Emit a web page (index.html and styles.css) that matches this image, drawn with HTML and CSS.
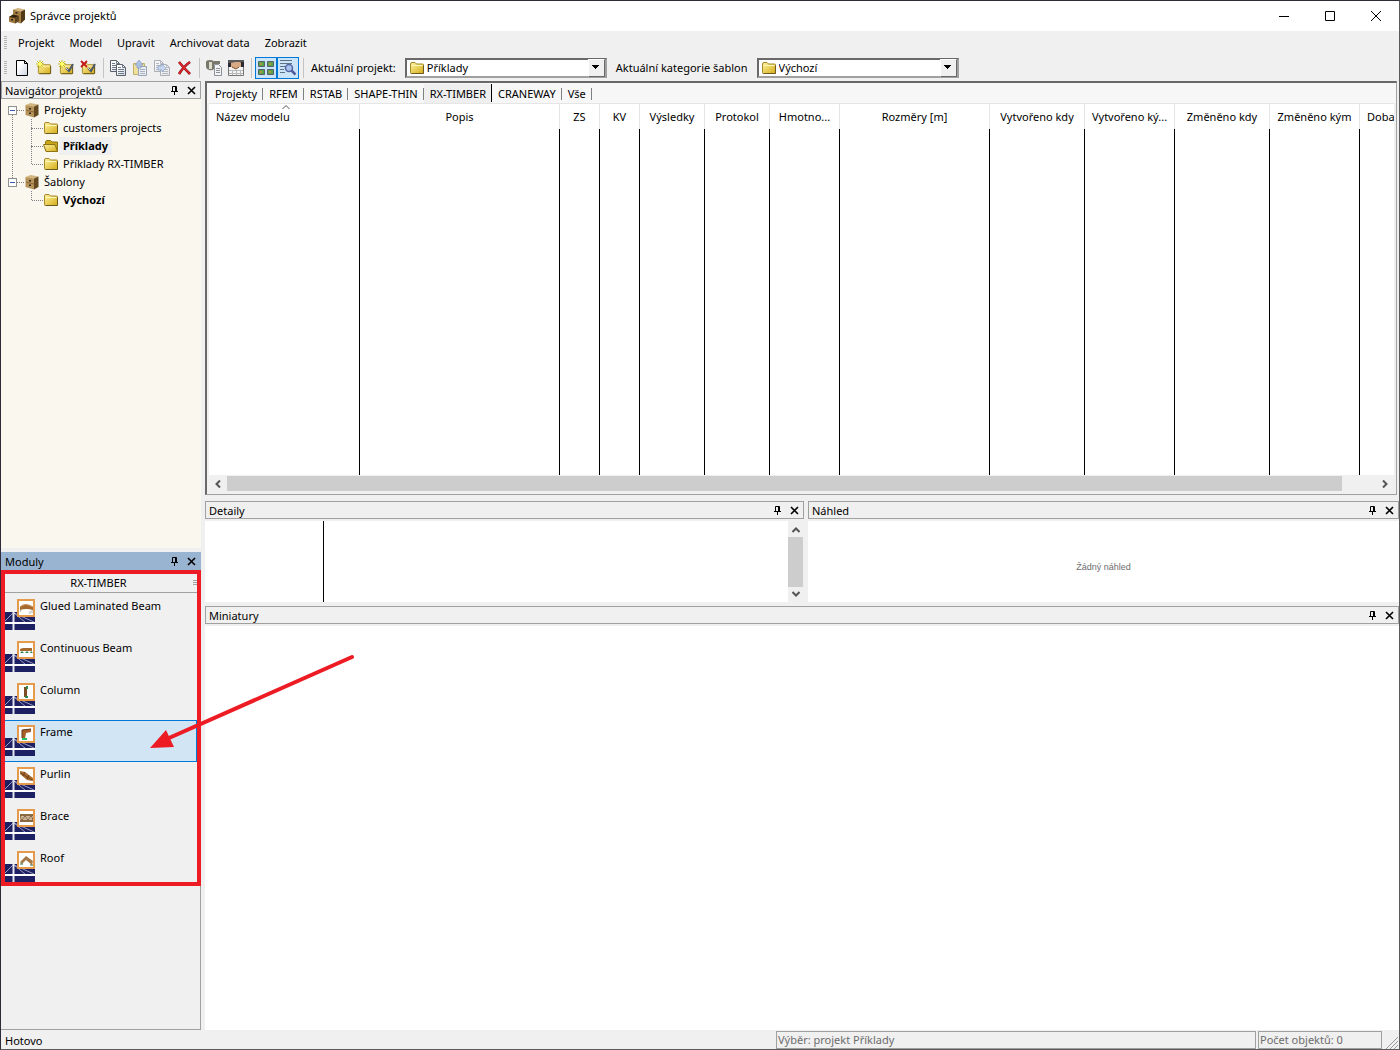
FILE: index.html
```
<!DOCTYPE html>
<html lang="cs">
<head>
    <meta charset="UTF-8">
    <meta name="viewport" content="width=device-width, initial-scale=1.0">
    <title>Správce projektů</title>
    <link rel="stylesheet" href="styles.css">
</head>
<body>
    <!-- shared icons -->
    <svg class="sprite" aria-hidden="true">
        <defs>
            <linearGradient id="gold" x1="0" y1="0" x2="1" y2="1">
                <stop offset="0" stop-color="#fff3a0"/>
                <stop offset="1" stop-color="#d5ac18"/>
            </linearGradient>
            <linearGradient id="paper" x1="0" y1="0" x2="1" y2="1">
                <stop offset="0.3" stop-color="#ffffff"/>
                <stop offset="1" stop-color="#ccd3e2"/>
            </linearGradient>
        </defs>
        <symbol id="folder" viewBox="0 0 16 16">
            <path d="M1.500 4q0-1.500 1.500-1.500h3l1.500 1.500h6q1 0 1 1v7.500q0 1-1 1h-11q-1 0-1-1z" fill="url(#gold)" stroke="#a48a26"/>
            <path d="M2.500 5.500h11" stroke="#fff8bd"/>
            <path d="M2.500 13.500h12v-8" fill="none" stroke="#6b5a1c"/>
        </symbol>
        <symbol id="folder-open" viewBox="0 0 16 16">
            <path d="M2.500 12.500v-9l1-1h4l1.500 1.500h5.500v9z" fill="#c9a51a" stroke="#8c7414"/>
            <path d="M.5 6.500h11.500l2.500 7h-11.500z" fill="url(#gold)" stroke="#8c7414"/>
        </symbol>
        <symbol id="cabinet" viewBox="0 0 16 16">
            <path d="M1.500 3l5-2 8 1.500-4.500 2z" fill="#d3b67c"/>
            <path d="M1.500 3l8.500 1.500v11l-8.500-2.500z" fill="#b5935a"/>
            <path d="M10 4.500l4.500-2v10.500l-4.500 2.500z" fill="#644820"/>
            <path d="M2 8.200l8 1.800" stroke="#8a6a38"/>
            <path d="M5 6h2v1.500h-2zM5 10.500h2v1.500h-2z" fill="#2f2518"/>
        </symbol>
        <symbol id="pin" viewBox="0 0 9 9">
            <path d="M2.500 5.500v-5h4v5M5.500 0v6M1 5.500h7M4.500 6v3" fill="none" stroke="#000"/>
        </symbol>
        <symbol id="cross" viewBox="0 0 9 9">
            <path d="M1 1l7 7M8 1l-7 7" stroke="#000" stroke-width="1.600"/>
        </symbol>
        <symbol id="star" viewBox="0 0 8 8">
            <path d="M4 0v8M0 4h8M1 1l6 6M7 1l-6 6" stroke="#c5bd18"/>
            <path d="M4 2v4M2 4h4" stroke="#fffb70" stroke-width="2"/>
        </symbol>
        <symbol id="sheet" viewBox="0 0 10 12">
            <path d="M.5.5h6l3 3v8h-9z" fill="url(#paper)" stroke="#59606c"/>
            <path d="M6.500.5v3h3M2 3.500h3M2 5.500h6M2 7.500h6M2 9.500h6" fill="none" stroke="#6f7886"/>
        </symbol>
        <symbol id="bridge" viewBox="0 0 31 31">
            <path d="M0 13h31v18h-31z" fill="#1d2163"/>
            <path d="M0 23l9-9M10 14l20 9M10 14l11 9" stroke="#b9bcd6" stroke-width=".8" fill="none"/>
            <path d="M9.500 13v18" stroke="#e4e5ef" stroke-width="2"/>
            <path d="M0 24h31" stroke="#fff" stroke-width="2"/>
            <path d="M14 1h16v16h-16z" fill="#fff" stroke="#e69b4c" stroke-width="2"/>
        </symbol>
    </svg>

    <header class="titlebar">
        <svg class="icon" viewBox="0 0 16 16">
            <path d="M4 1.500l5-1.500 7 1.500-4 2z" fill="#d3b67c"/>
            <path d="M4 1.500l8 2v12l-8-2.500z" fill="#a27e42"/>
            <path d="M12 3.500l4-2v10l-4 4z" fill="#513817"/>
            <path d="M0 9l4-2.500 6 1.500v5l-4 2.500-6-1.800z" fill="#9c783d"/>
            <path d="M0 9l4-2.500 6 1.500-4 2z" fill="#33240f"/>
            <path d="M6 10l4-2v5l-4 2.500z" fill="#604521"/>
            <path d="M6.500 4h2v1.500h-2zM2 11h2v1.500h-2z" fill="#2f2518"/>
        </svg>
        <h1>Správce projektů</h1>
        <div class="window-buttons">
            <button aria-label="Minimalizovat"><svg viewBox="0 0 12 12"><path d="M1 6.500h10" stroke="#000"/></svg></button>
            <button aria-label="Maximalizovat"><svg viewBox="0 0 12 12"><path d="M1.500 1.500h9v9h-9z" fill="none" stroke="#000"/></svg></button>
            <button aria-label="Zavřít"><svg viewBox="0 0 12 12"><path d="M1 1l10 10M11 1l-10 10" stroke="#000"/></svg></button>
        </div>
    </header>

    <nav class="menubar">
        <span class="grip"></span>
        <button>Projekt</button>
        <button>Model</button>
        <button>Upravit</button>
        <button>Archivovat data</button>
        <button>Zobrazit</button>
    </nav>

    <div class="toolbar">
        <span class="grip"></span>
        <button class="tool" aria-label="Nový model"><svg viewBox="0 0 16 16"><path d="M2.500.5h8l3 3v12h-11z" fill="url(#paper)" stroke="#000"/><path d="M10.500.5v3h3" fill="none" stroke="#000"/></svg></button>
        <button class="tool" aria-label="Nový projekt"><svg viewBox="0 0 16 16"><use href="#folder" x="1" y="1" width="15" height="15"/><use href="#star" width="8" height="8"/></svg></button>
        <button class="tool" aria-label="Připojit projekt"><svg viewBox="0 0 16 16"><use href="#folder" x="1" y="1" width="15" height="15"/><use href="#star" width="8" height="8"/><path d="M8 8l3 3 4-7" fill="none" stroke="#4d5868" stroke-width="2"/><path d="M8 8l2 2M14 4l1-1" stroke="#d7dce4"/></svg></button>
        <button class="tool" aria-label="Odpojit projekt"><svg viewBox="0 0 16 16"><use href="#folder" x="1" y="1" width="15" height="15"/><path d="M1 1l6 6M7 1l-6 6" stroke="#c5161c" stroke-width="1.800"/><path d="M8 8l3 3 4-7" fill="none" stroke="#4d5868" stroke-width="2"/><path d="M8 8l2 2" stroke="#d7dce4"/></svg></button>
        <span class="divider"></span>
        <button class="tool" aria-label="Kopírovat"><svg viewBox="0 0 16 16"><use href="#sheet" width="10" height="12"/><use href="#sheet" x="6" y="4" width="10" height="12"/></svg></button>
        <button class="tool" aria-label="Vložit"><svg viewBox="0 0 16 16"><path d="M1.500 3.500h11v11h-11z" fill="#efdf9d" stroke="#c2b067"/><path d="M6.500 6.500h8v9h-8z" fill="#e8ecf3" stroke="#9aa3b2"/><path d="M8 9.500h5M8 11.500h5M8 13.500h5" stroke="#aab2c0"/><path d="M7 0l4 5h-2v3h-4v-3h-2z" fill="#a9bfe4" stroke="#8097c2" stroke-width=".6"/></svg></button>
        <button class="tool" aria-label="Přesunout"><svg viewBox="0 0 16 16"><g opacity=".45"><use href="#sheet" width="10" height="12"/><use href="#sheet" x="6" y="4" width="10" height="12"/></g><path d="M4 6h4v-2l4 4-4 4v-2h-4z" fill="#c7d5ef" stroke="#8ea1c8" stroke-width=".7"/></svg></button>
        <button class="tool" aria-label="Smazat"><svg viewBox="0 0 16 16"><path d="M3 2q4 5 11 12M14 2q-6 4-11 12" fill="none" stroke="#7c1115" stroke-width="2.600"/><path d="M3 2q4 5 11 12M14 2q-6 4-11 12" fill="none" stroke="#e5242a" stroke-width="1.500"/></svg></button>
        <span class="divider"></span>
        <button class="tool" aria-label="Archivovat"><svg viewBox="0 0 16 16"><path d="M0 2q0-2 4-2t4 2v7q-2 2-5 1-3-1-3-3z" fill="#77776c"/><path d="M3 2h3v7h-3z" fill="#dedccb"/><path d="M8 1h6v3h-6z" fill="#77776c"/><path d="M8.500 4.500h4l3 3v8h-7z" fill="#f4f4f4" stroke="#8b919b"/><path d="M10 8.500h4M10 10.500h4M10 12.500h4" stroke="#8b919b"/></svg></button>
        <button class="tool" aria-label="Vlastnosti"><svg viewBox="0 0 16 16"><path d="M.5 3.500h15v12h-15z" fill="#f4f4f4" stroke="#777"/><path d="M1 10.500h14M1 13.500h14M8.500 10v5M12.500 10v5M4.500 10v5" stroke="#b8b8b8"/><path d="M0 0h16v3h-16z" fill="#5b5b5b"/><path d="M3 3l4-1 5 0 2 2v3l-3 0-3 2-5-2z" fill="#d8aa83"/><path d="M0 3h3v4h-3zM13 2h3v5h-3z" fill="#2a2a30"/><path d="M4 7l4 2 3-2" fill="none" stroke="#7d5336"/></svg></button>
        <span class="divider"></span>
        <button class="tool pressed" aria-pressed="true" aria-label="Miniatury"><svg viewBox="0 0 16 16"><path d="M.5 1.500h6v5h-6zM9.500 1.500h6v5h-6zM.5 9.500h6v5h-6zM9.500 9.500h6v5h-6z" fill="#58a34a" stroke="#54626c"/><path d="M2 3h2v2h-2zM11 3h2v2h-2zM2 11h2v2h-2zM11 11h2v2h-2z" fill="#b4943e"/></svg></button>
        <button class="tool pressed" aria-pressed="true" aria-label="Detaily"><svg viewBox="0 0 16 16"><path d="M0 .5h12M0 3.500h12M0 6.500h5M0 9.500h4M0 12.500h5" stroke="#5d7488"/><circle cx="9" cy="8" r="3.500" fill="#a9c5ee" stroke="#5566a6" stroke-width="1.500"/><path d="M11.500 10.500l4 4" stroke="#5058a0" stroke-width="2.500"/></svg></button>
        <span class="divider"></span>
        <label for="project">Aktuální projekt:</label>
        <div class="combo">
            <svg class="icon"><use href="#folder"/></svg>
            <select id="project">
                <option>Příklady</option>
                <option>customers projects</option>
                <option>Příklady RX-TIMBER</option>
            </select>
        </div>
        <label for="template">Aktuální kategorie šablon</label>
        <div class="combo">
            <svg class="icon"><use href="#folder"/></svg>
            <select id="template">
                <option>Výchozí</option>
            </select>
        </div>
    </div>

    <div class="workspace">
        <aside class="sidebar">
            <section class="panel navigator">
                <div class="panel-title">
                    <h2>Navigátor projektů</h2>
                    <button aria-label="Připnout"><svg><use href="#pin"/></svg></button>
                    <button aria-label="Zavřít"><svg><use href="#cross"/></svg></button>
                </div>
                <ul class="tree">
                    <li>
                        <div class="node"><button class="toggle" aria-label="Sbalit"></button><svg class="icon"><use href="#cabinet"/></svg><span>Projekty</span></div>
                        <ul>
                            <li><div class="node"><svg class="icon"><use href="#folder"/></svg><span>customers projects</span></div></li>
                            <li><div class="node current"><svg class="icon"><use href="#folder-open"/></svg><span>Příklady</span></div></li>
                            <li><div class="node"><svg class="icon"><use href="#folder"/></svg><span>Příklady RX-TIMBER</span></div></li>
                        </ul>
                    </li>
                    <li>
                        <div class="node"><button class="toggle" aria-label="Sbalit"></button><svg class="icon"><use href="#cabinet"/></svg><span>Šablony</span></div>
                        <ul>
                            <li><div class="node bold"><svg class="icon"><use href="#folder"/></svg><span>Výchozí</span></div></li>
                        </ul>
                    </li>
                </ul>
            </section>

            <section class="panel modules">
                <div class="panel-title active">
                    <h2>Moduly</h2>
                    <button aria-label="Připnout"><svg><use href="#pin"/></svg></button>
                    <button aria-label="Zavřít"><svg><use href="#cross"/></svg></button>
                </div>
                <div class="module-box">
                    <div class="module-group">
                        <h3>RX-TIMBER</h3>
                        <svg viewBox="0 0 4 7"><path d="M0 1.500h4M0 3.500h4M0 5.500h4" stroke="#a0a0a0"/></svg>
                    </div>
                    <button class="module"><svg viewBox="0 0 31 31"><use href="#bridge"/><path d="M16 8q5-5 13 0v3q-7-2-13 0z" fill="#a8692f"/><path d="M16 8q5-5 13 0" fill="none" stroke="#c98c4c"/><path d="M17 11l-1 2M26 12v3M28 11v3" stroke="#a9b3ad"/></svg>Glued Laminated Beam</button>
                    <button class="module"><svg viewBox="0 0 31 31"><use href="#bridge"/><path d="M16 8l3-1h9v3h-12z" fill="#a8692f"/><path d="M16 12l2-2 2 2zM21 12l2-2 2 2zM26 12l1-2 2 2z" fill="#2b8a4b"/></svg>Continuous Beam</button>
                    <button class="module"><svg viewBox="0 0 31 31"><use href="#bridge"/><path d="M20 4h3v10h-3z" fill="#7d4d26"/><path d="M22 3h2v3h-2zM21 13h3v2h-3z" fill="#2b8a4b"/></svg>Column</button>
                    <button class="module selected"><svg viewBox="0 0 31 31"><use href="#bridge"/><path d="M18 5l9-1v3l-5 1-1 6h-3z" fill="#a8602a"/><path d="M18 5l9-1M18 5v8" stroke="#60371a"/><path d="M18 13h5v2h-5z" fill="#23c365"/></svg>Frame</button>
                    <button class="module"><svg viewBox="0 0 31 31"><use href="#bridge"/><path d="M16 4l5 1 8 6v3l-6-1-7-6z" fill="#a8692f"/><path d="M17 6l11 7M21 5l-2 4M25 8l-2 4" stroke="#593516" stroke-width=".7"/></svg>Purlin</button>
                    <button class="module"><svg viewBox="0 0 31 31"><use href="#bridge"/><path d="M16 5h13v8h-13z" fill="#8b6842"/><path d="M16 11l3-4 3 4 3-4 3 4M17 7l3 4 3-4 3 4 3-4" fill="none" stroke="#e5d6c2" stroke-width=".8"/></svg>Brace</button>
                    <button class="module"><svg viewBox="0 0 31 31"><use href="#bridge"/><path d="M16 11l6-6 7 5-1 4-6-5-4 4z" fill="#a87946"/><path d="M16 13h3M26 14h3" stroke="#346948"/></svg>Roof</button>
                </div>
            </section>

            <!-- highlight of the module list -->
            <div class="highlight"></div>
            <svg class="pointer" viewBox="0 0 210 100"><path d="M203 7L20 88" stroke="#ed1c24" stroke-width="4" stroke-linecap="round"/><path d="M1 98l16-18 8 17z" fill="#ed1c24"/></svg>
        </aside>

        <main class="content">
            <section class="models">
                <div class="tabs" role="tablist">
                    <button role="tab">Projekty</button>
                    <button role="tab">RFEM</button>
                    <button role="tab">RSTAB</button>
                    <button role="tab">SHAPE-THIN</button>
                    <button role="tab" class="active" aria-selected="true">RX-TIMBER</button>
                    <button role="tab">CRANEWAY</button>
                    <button role="tab">Vše</button>
                </div>
                <div class="table-wrap">
                    <table>
                        <colgroup>
                            <col class="w-name"><col class="w-desc"><col class="w-flag"><col class="w-flag"><col class="w-small"><col class="w-small"><col class="w-mass"><col class="w-name"><col class="w-date"><col class="w-user"><col class="w-date"><col class="w-user"><col class="w-date">
                        </colgroup>
                        <thead>
                            <tr>
                                <th class="sorted">Název modelu<svg viewBox="0 0 8 4"><path d="M.5 4l3.500-3.500 3.500 3.500" fill="none" stroke="#555"/></svg></th>
                                <th>Popis</th>
                                <th>ZS</th>
                                <th>KV</th>
                                <th>Výsledky</th>
                                <th>Protokol</th>
                                <th>Hmotno...</th>
                                <th>Rozměry [m]</th>
                                <th>Vytvořeno kdy</th>
                                <th>Vytvořeno ký...</th>
                                <th>Změněno kdy</th>
                                <th>Změněno kým</th>
                                <th class="left">Doba</th>
                            </tr>
                        </thead>
                        <tbody>
                            <tr><td></td><td></td><td></td><td></td><td></td><td></td><td></td><td></td><td></td><td></td><td></td><td></td><td></td></tr>
                        </tbody>
                    </table>
                </div>
                <div class="hscroll">
                    <svg viewBox="0 0 8 8"><path d="M6 .5l-3.500 3.500 3.500 3.500" fill="none" stroke="#555" stroke-width="2"/></svg>
                    <div class="track"><div class="thumb"></div></div>
                    <svg viewBox="0 0 8 8"><path d="M2 .5l3.500 3.500-3.500 3.500" fill="none" stroke="#555" stroke-width="2"/></svg>
                </div>
            </section>

            <div class="split">
                <section class="panel">
                    <div class="panel-title">
                        <h2>Detaily</h2>
                        <button aria-label="Připnout"><svg><use href="#pin"/></svg></button>
                        <button aria-label="Zavřít"><svg><use href="#cross"/></svg></button>
                    </div>
                    <div class="panel-body details">
                        <div class="detail-names"></div>
                        <div class="detail-values"></div>
                        <div class="vscroll">
                            <svg viewBox="0 0 8 8"><path d="M.5 6l3.500-3.500 3.500 3.500" fill="none" stroke="#555" stroke-width="2"/></svg>
                            <div class="thumb"></div>
                            <svg viewBox="0 0 8 8"><path d="M.5 2l3.500 3.500 3.500-3.500" fill="none" stroke="#555" stroke-width="2"/></svg>
                        </div>
                    </div>
                </section>
                <section class="panel">
                    <div class="panel-title">
                        <h2>Náhled</h2>
                        <button aria-label="Připnout"><svg><use href="#pin"/></svg></button>
                        <button aria-label="Zavřít"><svg><use href="#cross"/></svg></button>
                    </div>
                    <div class="panel-body preview">Žádný náhled</div>
                </section>
            </div>

            <section class="panel thumbnails">
                <div class="panel-title">
                    <h2>Miniatury</h2>
                    <button aria-label="Připnout"><svg><use href="#pin"/></svg></button>
                    <button aria-label="Zavřít"><svg><use href="#cross"/></svg></button>
                </div>
                <div class="panel-body"></div>
            </section>
        </main>
    </div>

    <footer class="statusbar">
        <span class="ready">Hotovo</span>
        <span class="cell selection">Výběr: projekt Příklady</span>
        <span class="cell count">Počet objektů: 0</span>
        <svg viewBox="0 0 14 14"><path d="M2 14l12-12M6 14l8-8M10 14l4-4" stroke="#9a9a9a"/></svg>
    </footer>
</body>
</html>
```

FILE: styles.css
```
* {
    box-sizing: border-box;
}

body {
    display: flex;
    flex-direction: column;
    min-height: 100vh;
    margin: 0;
    border: 1px solid #5b5b5f;
    border-top-color: #2e2a3a;
    border-left-color: #2e2a3a;
    background: #f0f0f0;
    color: #000;
    font-family: "Noto Sans", "Open Sans", sans-serif;
    font-size: 11px;
    line-height: 16px;
}

h1, h2, h3 {
    margin: 0;
    font-size: 11px;
    font-weight: normal;
}

button {
    display: flex;
    align-items: center;
    justify-content: center;
    padding: 0;
    border: 0;
    background: none;
    color: inherit;
    font: inherit;
}

.sprite {
    position: absolute;
    width: 0;
    height: 0;
}

.icon {
    flex: none;
    width: 16px;
    height: 16px;
}

/* title bar */
.titlebar {
    display: flex;
    align-items: center;
    gap: 5px;
    height: 30px;
    padding: 0 0 1px 8px;
    background: #fff;
}

.window-buttons {
    display: flex;
    margin-left: auto;
}

.window-buttons button {
    width: 46px;
    height: 29px;
}

.window-buttons svg {
    width: 12px;
    height: 12px;
}

/* menu and toolbar */
.menubar,
.toolbar {
    display: flex;
    align-items: center;
    padding-left: 3px;
}

.menubar {
    height: 24px;
}

.toolbar {
    height: 26px;
}

.menubar button {
    padding: 0 7px 0 8px;
}

.menubar button:nth-of-type(1) {
    padding-left: 7px;
}

.grip {
    width: 3px;
    height: 14px;
    margin-right: 4px;
    background: repeating-linear-gradient(#b4b4b4 0 1px, transparent 1px 2px);
}

.tool {
    width: 22px;
    height: 22px;
}

.tool svg {
    width: 16px;
    height: 16px;
}

.tool.pressed {
    border: 1px solid #0078d7;
    background: #cce4f7;
}

.divider {
    width: 1px;
    height: 20px;
    margin: 0 3px 0 4px;
    background: #c4c4c4;
}

.toolbar label {
    padding: 0 9px 0 4px;
}

.combo {
    display: flex;
    align-items: center;
    position: relative;
    margin-right: 5px;
}

.combo .icon {
    position: absolute;
    left: 4px;
}

.combo select {
    appearance: none;
    width: 202px;
    height: 20px;
    padding: 0 20px;
    border: 2px solid;
    border-color: #696969 #a0a0a0 #a0a0a0 #696969;
    border-radius: 0;
    background: #fff;
    color: #000;
    font: inherit;
}

/* drop-down button */
.combo::after {
    content: "";
    position: absolute;
    right: 2px;
    width: 15px;
    height: 16px;
    border: 1px solid;
    border-color: #fff #696969 #696969 #fff;
    background: linear-gradient(#000, #000) 3px 5px / 7px 1px no-repeat,
        linear-gradient(#000, #000) 4px 6px / 5px 1px no-repeat,
        linear-gradient(#000, #000) 5px 7px / 3px 1px no-repeat,
        linear-gradient(#000, #000) 6px 8px / 1px 1px no-repeat,
        #f0f0f0;
    pointer-events: none;
}

/* docked panels */
.workspace {
    display: flex;
    flex: 1;
    gap: 4px;
}

.panel {
    display: flex;
    flex-direction: column;
}

.panel-title {
    display: flex;
    align-items: center;
    flex: none;
    height: 18px;
    padding: 0 3px;
    border: 1px solid #a0a0a0;
}

.panel-title h2 {
    flex: 1;
    padding-top: 2px;
}

.panel-title button {
    width: 17px;
    height: 16px;
}

.panel-title button:last-child {
    width: 11px;
    margin-left: 3px;
}

.panel-title svg {
    width: 9px;
    height: 9px;
}

.panel-title.active {
    border-color: #99b4d1;
    background: #99b4d1;
}

.panel-body {
    flex: 1;
    margin-top: 2px;
    background: #fff;
}

/* sidebar */
.sidebar {
    display: flex;
    flex-direction: column;
    flex: none;
    gap: 4px;
    position: relative;
    width: 200px;
}

.navigator {
    height: 467px;
}

.tree {
    flex: 1;
    margin: 0;
    padding: 2px 0 0 7px;
    background: #faf7ef;
    list-style: none;
}

.tree ul {
    margin: 0;
    padding: 0 0 0 35px;
    list-style: none;
}

.tree li {
    position: relative;
}

.node {
    display: flex;
    align-items: center;
    height: 18px;
}

.node span {
    padding: 0 4px;
    line-height: 18px;
}

.toggle {
    width: 9px;
    height: 9px;
    margin-right: 7px;
    border: 1px solid #919191;
    background: linear-gradient(#3a5bab, #3a5bab) center / 5px 1px no-repeat #fff;
    z-index: 1;
}

.current,
.bold {
    font-weight: bold;
}

.current span {
    background: #f0f0f0;
}

/* dotted connectors */
.tree li::before,
.tree li::after {
    content: "";
    position: absolute;
}

.tree > li::before {
    top: 9px;
    left: 9px;
    width: 7px;
    border-top: 1px dotted #808080;
}

.tree > li:first-child::after {
    top: 14px;
    bottom: -5px;
    left: 4px;
    border-left: 1px dotted #808080;
}

.tree ul li::before {
    top: 9px;
    left: -11px;
    width: 11px;
    border-top: 1px dotted #808080;
}

.tree ul li::after {
    top: -9px;
    left: -12px;
    height: 18px;
    border-left: 1px dotted #808080;
}

.tree ul li:first-child::after {
    top: 0;
    height: 9px;
}

.modules {
    flex: 1;
}

.module-box {
    display: flex;
    flex-direction: column;
    flex: 1;
    padding: 3px 3px 0 3px;
    border: 1px solid #a0a0a0;
    border-top: 0;
    border-left: 0;
}

.module-group {
    display: flex;
    align-items: center;
    height: 20px;
    margin-bottom: 1px;
    border-bottom: 1px solid #a0a0a0;
}

.module-group h3 {
    flex: 1;
    text-align: center;
}

.module-group svg {
    width: 4px;
    height: 7px;
}

.module {
    align-items: flex-start;
    justify-content: flex-start;
    gap: 5px;
    height: 42px;
    padding: 3px 0;
    border: 1px solid transparent;
    border-left: 0;
}

.module svg {
    width: 31px;
    height: 31px;
    margin-top: 1px;
}

.module.selected {
    border-color: #0078d7;
    background: #d1e5f5;
}

/* annotation over the module list */
.highlight {
    position: absolute;
    top: 489px;
    left: 0;
    width: 200px;
    height: 316px;
    border: 4px solid #ed1c24;
    pointer-events: none;
}

.pointer {
    position: absolute;
    top: 569px;
    left: 148px;
    width: 210px;
    height: 100px;
    z-index: 1;
    pointer-events: none;
}

/* main area */
.content {
    display: flex;
    flex-direction: column;
    flex: 1;
    gap: 4px;
    min-width: 0;
}

.models {
    display: flex;
    flex-direction: column;
    height: 414px;
    margin: 0 2px 2px 0;
    padding: 0 2px 2px;
    border: 2px solid #696969;
    border-right: 1px solid #a0a0a0;
    border-bottom: 1px solid #a0a0a0;
}

.tabs {
    display: flex;
    height: 20px;
    margin: 0 -2px;
    padding: 1px 2px 0;
    background: #f7f7f7;
}

.tabs button {
    position: relative;
    padding: 0 6px;
}

.tabs button::after {
    content: "";
    position: absolute;
    top: 4px;
    right: 0;
    width: 1px;
    height: 12px;
    background: #808080;
}

.tabs .active {
    background: #efefef;
}

.tabs .active::after {
    top: 0;
    height: 18px;
    background: #000;
}

.table-wrap {
    flex: 1;
    overflow: hidden;
    padding-left: 1px;
    border-top: 1px solid #e5e5e5;
    background: #fff;
}

table {
    width: 1245px;
    height: 100%;
    border-collapse: separate;
    border-spacing: 0;
    table-layout: fixed;
}

.w-name { width: 150px; }
.w-desc { width: 200px; }
.w-flag { width: 40px; }
.w-small { width: 65px; }
.w-mass { width: 70px; }
.w-date { width: 95px; }
.w-user { width: 90px; }

th {
    height: 25px;
    padding: 0;
    border-right: 1px solid #e5e5e5;
    font-weight: normal;
    white-space: nowrap;
}

th.sorted {
    position: relative;
    padding-left: 6px;
    text-align: left;
}

th.sorted svg {
    position: absolute;
    top: 1px;
    left: 72px;
    width: 8px;
    height: 4px;
}

th.left {
    padding-left: 7px;
    text-align: left;
}

td {
    padding: 0;
    border-right: 1px solid #000;
}

.hscroll {
    display: flex;
    align-items: center;
    gap: 5px;
    height: 17px;
    padding: 0 5px;
}

.hscroll svg,
.vscroll svg {
    width: 8px;
    height: 8px;
}

.hscroll .track {
    flex: 1;
}

.thumb {
    background: #cdcdcd;
}

.hscroll .thumb {
    width: 97%;
    height: 15px;
}

.split {
    display: grid;
    grid-template-columns: 599fr 591fr;
    gap: 4px;
    height: 101px;
}

.details {
    display: flex;
}

.detail-names {
    width: 119px;
    border-right: 1px solid #000;
}

.detail-values {
    flex: 1;
}

.vscroll {
    display: flex;
    flex-direction: column;
    align-items: center;
    gap: 3px;
    width: 16px;
    padding: 5px 0 4px;
    border-right: 1px solid #f0f0f0;
    background: #f0f0f0;
}

.vscroll .thumb {
    flex: 1;
    width: 15px;
}

.preview {
    display: flex;
    align-items: center;
    justify-content: center;
    padding-top: 10px;
    color: #6d6d6d;
    font-family: "Liberation Sans", Arial, sans-serif;
    font-size: 9px;
}

.thumbnails {
    flex: 1;
}

/* status bar */
.statusbar {
    display: flex;
    gap: 2px;
    height: 19px;
    padding: 1px 1px 0 4px;
}

.ready {
    flex: 1;
    padding-top: 2px;
}

.cell {
    padding: 0 1px;
    border: 1px solid #a0a0a0;
    color: #6d6d6d;
}

.selection {
    width: 480px;
}

.count {
    width: 124px;
}

.statusbar svg {
    align-self: flex-end;
    width: 14px;
    height: 14px;
}
```
